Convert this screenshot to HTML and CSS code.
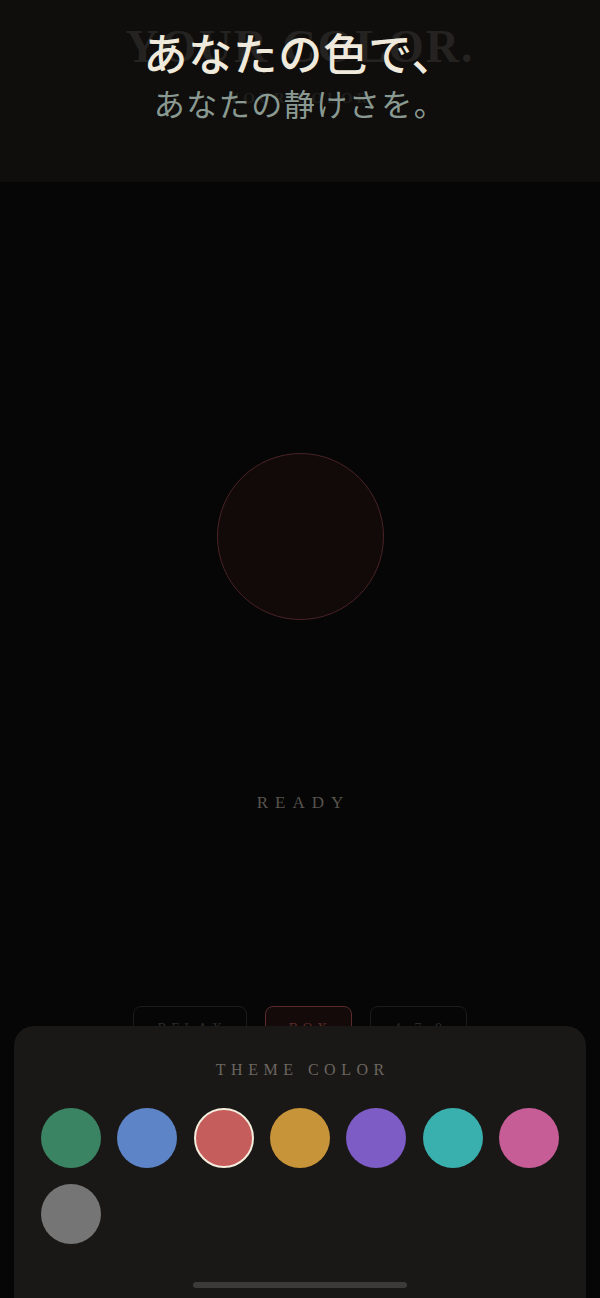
FILE: index.html
```html
<!DOCTYPE html>
<html lang="ja">
<head>
<meta charset="utf-8">
<title>YOUR COLOR.</title>
<link rel="stylesheet" href="styles.css">
</head>
<body>
<div class="app">
  <header class="hero">
    <div class="ghost ghost-big" aria-hidden="true">YOUR COLOR.</div>
    <div class="ghost ghost-small" aria-hidden="true">YOUR COLOR</div>
    <h1 class="title">あなたの色で、</h1>
    <p class="subtitle">あなたの静けさを。</p>
  </header>

  <main class="stage">
    <div class="orb"></div>
    <div class="status">READY</div>
    <div class="modes">
      <button class="mode">RELAX</button>
      <button class="mode mode-active">BOX</button>
      <button class="mode">4-7-8</button>
    </div>
  </main>

  <section class="sheet">
    <h2 class="sheet-title">THEME COLOR</h2>
    <div class="swatches">
      <span class="swatch sw-green"></span>
      <span class="swatch sw-blue"></span>
      <span class="swatch sw-red swatch-selected"></span>
      <span class="swatch sw-gold"></span>
      <span class="swatch sw-purple"></span>
      <span class="swatch sw-teal"></span>
      <span class="swatch sw-pink"></span>
      <span class="swatch sw-gray"></span>
    </div>
    <div class="home-indicator"></div>
  </section>
</div>
</body>
</html>
```

FILE: styles.css
```css
* { box-sizing: border-box; }

html, body {
  margin: 0;
  padding: 0;
  background: #060606;
}

.app {
  position: relative;
  width: 600px;
  height: 1298px;
  overflow: hidden;
  background: #060606;
}

.hero {
  position: relative;
  height: 182px;
  background: #0f0e0c;
  padding-top: 26px;
  text-align: center;
}

.ghost {
  position: absolute;
  left: 0;
  right: 0;
  text-align: center;
  font-family: "Liberation Serif", "Times New Roman", serif;
  font-weight: bold;
  color: #252321;
  white-space: nowrap;
}

.ghost-big {
  top: 24px;
  font-size: 46px;
  line-height: 46px;
  letter-spacing: 2px;
}

.ghost-small {
  top: 90px;
  font-size: 15px;
  line-height: 16px;
  letter-spacing: 4px;
  color: #1f1e1c;
}

.title {
  position: relative;
  margin: 0;
  font-family: "Noto Sans CJK JP", sans-serif;
  font-weight: 500;
  font-size: 44px;
  line-height: 1.2;
  letter-spacing: 1px;
  color: #efeadc;
}

.subtitle {
  position: relative;
  margin: 5px 0 0;
  font-family: "Noto Sans CJK JP", sans-serif;
  font-weight: 400;
  font-size: 31px;
  line-height: 1.2;
  letter-spacing: 1.5px;
  color: #8a9a92;
}

.stage {
  display: flex;
  flex-direction: column;
  align-items: center;
}

.orb {
  margin-top: 271px;
  width: 167px;
  height: 167px;
  border-radius: 50%;
  background: #120909;
  border: 1.5px solid #4a2326;
}

.status {
  margin-top: 173px;
  font-family: "Liberation Serif", "Times New Roman", serif;
  font-size: 17px;
  line-height: 20px;
  letter-spacing: 7px;
  padding-left: 7px;
  color: #57534d;
}

.modes {
  margin-top: 193px;
  display: flex;
  gap: 18px;
  justify-content: center;
}

.mode {
  background: transparent;
  border: 1px solid #1e1c1a;
  border-radius: 8px;
  padding: 13px 19px 20px 23px;
  font-family: "Liberation Serif", "Times New Roman", serif;
  font-size: 14px;
  line-height: 18px;
  letter-spacing: 4.5px;
  color: #2c2a28;
}

.mode-active {
  border-color: #5a2a2d;
  background: #140a0a;
  color: #5a2c2c;
}

.sheet {
  position: absolute;
  left: 14px;
  right: 14px;
  top: 1026px;
  bottom: 0;
  background: #1a1816;
  border-radius: 20px 20px 0 0;
  padding: 34px 27px 0;
  display: flex;
  flex-direction: column;
}

.sheet-title {
  margin: 0;
  text-align: center;
  font-family: "Liberation Serif", "Times New Roman", serif;
  font-weight: normal;
  font-size: 16px;
  line-height: 20px;
  letter-spacing: 5.5px;
  padding-left: 5.5px;
  color: #6b6660;
}

.swatches {
  margin-top: 28px;
  display: grid;
  grid-template-columns: repeat(7, 60px);
  justify-content: space-between;
  row-gap: 16px;
}

.swatch {
  display: block;
  width: 60px;
  height: 60px;
  border-radius: 50%;
}

.swatch-selected {
  border: 2px solid #f4ecdc;
}

.sw-green  { background: #3b8463; }
.sw-blue   { background: #5d84c6; }
.sw-red    { background: #c65d5d; }
.sw-gold   { background: #c8943a; }
.sw-purple { background: #7e5cc6; }
.sw-teal   { background: #3ab0ae; }
.sw-pink   { background: #c65d97; }
.sw-gray   { background: #757575; }

.home-indicator {
  margin: 38px auto 0;
  width: 214px;
  height: 6px;
  border-radius: 3px;
  background: #3d3b39;
}
```
